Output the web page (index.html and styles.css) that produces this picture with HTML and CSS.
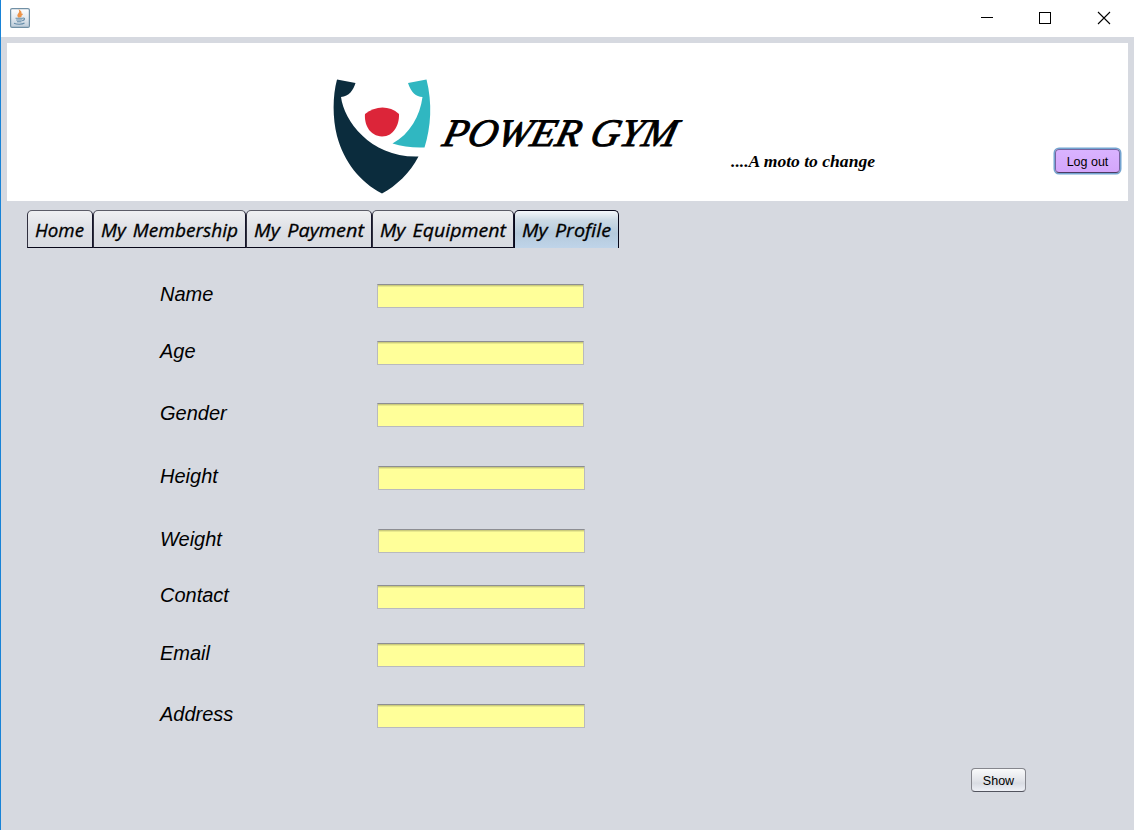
FILE: index.html
```html
<!DOCTYPE html>
<html lang="en">
<head>
<meta charset="utf-8">
<title>Power Gym</title>
<link rel="stylesheet" href="styles.css">
</head>
<body>
<div class="window">
  <header class="titlebar">
    <svg class="app-icon" width="20" height="20" viewBox="0 0 20 20">
      <defs><linearGradient id="ig" x1="0" y1="0" x2="0" y2="1"><stop offset="0" stop-color="#fff"/><stop offset=".5" stop-color="#e4eaf0"/><stop offset="1" stop-color="#bccbd8"/></linearGradient></defs>
      <rect x=".6" y=".6" width="18.8" height="18.8" rx="1.5" fill="url(#ig)" stroke="#7190a5" stroke-width="1.2"/>
      <path d="M9.500 9.300C6 7 10.500 5.800 10 3.300C12.500 5.500 8 6.500 9.500 9.300M11 9C10 7.500 11 6.800 12.500 6" fill="none" stroke="#ee9348" stroke-width="1.700"/>
      <path d="M5.500 10.300H12.500M6.200 12H12.300M7 13.700H11.500M12.500 10.200C15.500 9.500 15 12 12.300 12.800M4 15.200C7 16.600 12 16.500 14.500 15" fill="none" stroke="#658ca8" stroke-width="1.100"/>
    </svg>
    <div class="controls">
      <svg width="14" height="14" viewBox="0 0 14 14"><path d="M2 6.500H14" stroke="#000" fill="none"/></svg>
      <svg width="14" height="14" viewBox="0 0 14 14"><rect x="1.500" y="1.500" width="11" height="11" stroke="#000" fill="none"/></svg>
      <svg width="14" height="14" viewBox="0 0 14 14"><path d="M1 1L13 13M13 1L1 13" stroke="#000" stroke-width="1.100" fill="none"/></svg>
    </div>
  </header>
  <section class="banner">
    <svg class="logo" width="104" height="120" viewBox="330 76 104 120">
      <path d="M337 79.500L355.500 83C353.500 90 349 96.500 341 97C344 121 371 158 418.500 156.500C410 173 396 186 382 193.500C360 182 344 162 337 136C332.500 118 332.500 96 337 79.500Z" fill="#0b2c3d"/>
      <path d="M408 83L426.500 79.500C432.500 103 431 127 424.500 147.500C413 148 402 146.500 392.500 143.500C410 134 420 116 422.500 97C416 97 411 92 408 83Z" fill="#30b7c1"/>
      <path d="M365 114C375 106 389 105 399 114C399.500 124 394 136.500 382 136.500C370 136 364 125 365 114Z" fill="#dc2539"/>
    </svg>
    <svg class="wordmark" width="260" height="60" viewBox="434 110 260 60">
      <text class="brand" transform="translate(441 146) skewX(-14)" textLength="233" lengthAdjust="spacingAndGlyphs">POWER GYM</text>
    </svg>
    <svg class="motto-box" width="160" height="30" viewBox="725 148 160 30">
      <text class="motto" x="731" y="167" textLength="144" lengthAdjust="spacingAndGlyphs">....A moto to change</text>
    </svg>
    <button class="btn logout">Log out</button>
  </section>
  <nav class="tabs">
    <div class="tab t1"><svg width="50" height="34"><text x="0" y="26" textLength="49" lengthAdjust="spacingAndGlyphs">Home</text></svg></div>
    <div class="tab t2"><svg width="138" height="34"><text x="0" y="26" textLength="137" lengthAdjust="spacingAndGlyphs">My Membership</text></svg></div>
    <div class="tab t3"><svg width="111" height="34"><text x="0" y="26" textLength="110" lengthAdjust="spacingAndGlyphs">My Payment</text></svg></div>
    <div class="tab t4"><svg width="127" height="34"><text x="0" y="26" textLength="126" lengthAdjust="spacingAndGlyphs">My Equipment</text></svg></div>
    <div class="tab t5 active"><svg width="90" height="34"><text x="0" y="26" textLength="89" lengthAdjust="spacingAndGlyphs">My Profile</text></svg></div>
  </nav>
  <main class="form">
    <label class="row g33">Name<input class="field"></label>
    <label class="row g38">Age<input class="field"></label>
    <label class="row g39">Gender<input class="field"></label>
    <label class="row g39">Height<input class="field shifted"></label>
    <label class="row g32">Weight<input class="field shifted"></label>
    <label class="row g34">Contact<input class="field wide"></label>
    <label class="row g37">Email<input class="field wide"></label>
    <label class="row">Address<input class="field wide"></label>
  </main>
  <footer class="actions"><button class="btn show">Show</button></footer>
</div>
</body>
</html>
```
FILE: styles.css
```css
* { box-sizing: border-box; }
body { margin: 0; background: #d6d9e0; font-family: "Liberation Sans", Arial, sans-serif; color: #000; }
.window { height: 830px; border-left: 1px solid #1883d7; overflow: hidden; }
.titlebar { height: 37px; background: #fff; display: flex; justify-content: space-between; padding: 8px 23px 0 9px; }
.controls { display: flex; gap: 45px; padding-top: 3px; }
svg { display: block; flex: none; }
.banner { height: 158px; margin: 6px 6px 0; background: #fff; display: flex; align-items: flex-start; }
.logo { margin: 33px 0 0 323px; }
.wordmark { margin-top: 67px; }
.motto-box { margin: 105px 0 0 31px; }
.brand { font: italic 39px "Liberation Serif", serif; stroke: #000; stroke-width: 1px; }
.motto { font: italic bold 16px "Liberation Serif", serif; }
.btn { font: 12.5px "Liberation Sans", Arial, sans-serif; color: #000; padding: 2px 0 0; border-radius: 4px; }
.logout { width: 65px; height: 24px; margin: 106px 8px 0 auto; background: linear-gradient(#d9b3ff, #d4a6fb); border: 1px solid #7664a0; border-bottom-color: #4b3c62; box-shadow: 0 0 0 1.500px #73a4d1; flex: none; }
.tabs { display: flex; margin: 9px 0 0 26px; height: 38px; }
.tab { height: 38px; border: 1px solid #5b5c67; border-bottom: 1px solid #08081a; border-right: 1px solid #16162a; border-left-color: #30303f; border-radius: 5px 5px 0 0; background: linear-gradient(#eff0f2, #e0e2e7 45%, #dcdee4 60%, #d8dbe1); padding-left: 7px; }
.tab text { font: italic 18px "Open Sans", "Noto Sans", sans-serif; word-spacing: 2px; stroke: #000; stroke-width: .3px; }
.t1 { width: 66px; }
.t2 { width: 153px; }
.t3 { width: 126px; }
.t4 { width: 142px; }
.t5 { width: 105px; }
.active { border-color: #08081a; border-bottom: 0; background: linear-gradient(#f4f7fb, #ccdae5 25%, #b5cadc 60%, #bfd4e9); }
.form { margin: 36px 0 0 159px; }
.row { display: flex; height: 24px; justify-content: space-between; width: 425px; font-size: 20px; font-style: italic; line-height: 20px; }
.field { width: 207px; height: 24px; margin: 0 1px 0 0; padding: 0 5px; border: 1px solid #b9babd; border-top-color: #8d8e93; border-radius: 0; background: linear-gradient(#cccc7b 0 1px, #e9e98d 1px 2px, #ffff99 2px); outline: 0; }
.shifted { margin-right: 0; }
.wide { width: 208px; margin-right: 0; }
.g32 { margin-bottom: 32px; }
.g33 { margin-bottom: 33px; }
.g34 { margin-bottom: 34px; }
.g37 { margin-bottom: 37px; }
.g38 { margin-bottom: 38px; }
.g39 { margin-bottom: 39px; }
.actions { display: flex; justify-content: flex-end; padding: 40px 108px 0 0; }
.show { width: 55px; height: 24px; border: 1px solid #85868d; border-bottom-color: #52545e; background: linear-gradient(#f9fafb, #e3e5ea 50%, #d9dce3 65%, #eff1f7); }
```
